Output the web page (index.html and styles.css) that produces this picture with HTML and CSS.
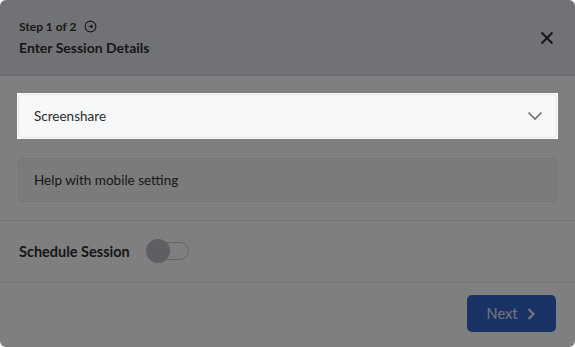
FILE: index.html
```html
<!DOCTYPE html>
<html>
<head>
    <title>Create Session</title>
    <link rel="stylesheet" href="styles.css">
</head>
<body>
<div class="modal">
    <div class="modal-header">
        <div>
            <div class="step">Step 1 of 2
                <svg class="step-icon" width="13" height="13" viewBox="0 0 14 14">
                    <circle cx="7" cy="7" r="5.8" fill="none" stroke="#333" stroke-width="1.2"/>
                    <path d="M5 7h4M7.3 5.3L9 7l-1.7 1.7" fill="none" stroke="#333" stroke-width="1.2"/>
                </svg>
            </div>
            <div class="title">Enter Session Details</div>
        </div>
        <svg class="close" width="14" height="14" viewBox="0 0 14 14">
            <path d="M1.5 1.5l11 11M12.5 1.5l-11 11" stroke="#2a2a2a" stroke-width="2"/>
        </svg>
    </div>

    <div class="modal-body">
        <div class="spotlight">
            <div class="select">
                <span>Screenshare</span>
                <svg width="16" height="10" viewBox="0 0 16 10">
                    <path d="M1.5 1.5L8 8l6.5-6.5" fill="none" stroke="#6b6d72" stroke-width="1.6"/>
                </svg>
            </div>
        </div>
        <div class="field">Help with mobile setting</div>
    </div>

    <div class="schedule">
        <span>Schedule Session</span>
        <div class="toggle"><div class="knob"></div></div>
    </div>

    <div class="modal-footer">
        <button class="next">Next
            <svg width="10" height="14" viewBox="0 0 10 14">
                <path d="M2.5 2l5 5-5 5" fill="none" stroke="#e8eaf0" stroke-width="2.2"/>
            </svg>
        </button>
    </div>
    <div class="overlay"></div>
</div>
</body>
</html>
```

FILE: styles.css
```css
body {
    margin: 0;
    background: #ffffff;
    font-family: Lato, "Open Sans", sans-serif;
    color: #3a3a3a;
}

.modal {
    position: relative;
    width: 575px;
    height: 347px;
    background: #ffffff;
    border-radius: 6px;
    overflow: hidden;
    display: flex;
    flex-direction: column;
}

.overlay {
    position: absolute;
    inset: 0;
    background: rgba(0, 0, 0, 0.5);
    z-index: 1;
}

.modal-header {
    height: 76px;
    background: #e3e5ed;
    border-bottom: 1px solid #d6d8e0;
    box-sizing: border-box;
    padding: 0 21px 0 19px;
    display: flex;
    align-items: center;
    justify-content: space-between;
}

.step {
    font-size: 12px;
    font-weight: 700;
    color: #333;
    display: flex;
    align-items: center;
    gap: 8px;
    margin-top: 0;
}

.title {
    font-size: 14px;
    font-weight: 700;
    color: #2e2e2e;
    margin-top: 5px;
}

.close {
    margin-top: 1px;
}

.modal-body {
    padding: 18px 18px 18px 18px;
    border-bottom: 1px solid #ececec;
    display: flex;
    flex-direction: column;
    gap: 20px;
}

.spotlight {
    position: relative;
    z-index: 2;
    margin: -1px;
    padding: 1px;
    background: #ffffff;
}

.select {
    height: 44px;
    box-sizing: border-box;
    border: 1px solid #e4e6ec;
    border-radius: 4px;
    background: #f7f8fa;
    padding: 0 13px 0 15px;
    display: flex;
    align-items: center;
    justify-content: space-between;
    font-size: 13.5px;
    color: #2b2b2b;
}

.field {
    height: 44px;
    box-sizing: border-box;
    border: 1px solid #e9eaee;
    border-radius: 5px;
    background: #f6f6f8;
    padding: 0 15px;
    display: flex;
    align-items: center;
    font-size: 13.5px;
    color: #333;
}

.schedule {
    height: 61px;
    border-bottom: 1px solid #ececec;
    padding: 0 19px;
    display: flex;
    align-items: center;
    gap: 12px;
    font-size: 14.5px;
    font-weight: 700;
    color: #2e2e2e;
}

.toggle {
    position: relative;
    width: 42px;
    height: 18px;
    box-sizing: border-box;
    border: 1px solid #c8c8c8;
    border-radius: 9px;
    margin-left: 5px;
    margin-top: -2px;
}

.knob {
    position: absolute;
    left: -2px;
    top: -4px;
    width: 24px;
    height: 24px;
    border-radius: 50%;
    background: #bcbec6;
}

.modal-footer {
    flex: 1;
    padding: 12px 19px 0 19px;
    display: flex;
    justify-content: flex-end;
    align-items: flex-start;
}

.next {
    width: 89px;
    height: 37px;
    border: none;
    border-radius: 5px;
    background: #3466cc;
    color: #e8eaf0;
    font-family: inherit;
    font-size: 14.5px;
    display: flex;
    align-items: center;
    justify-content: center;
    gap: 9px;
}
```
